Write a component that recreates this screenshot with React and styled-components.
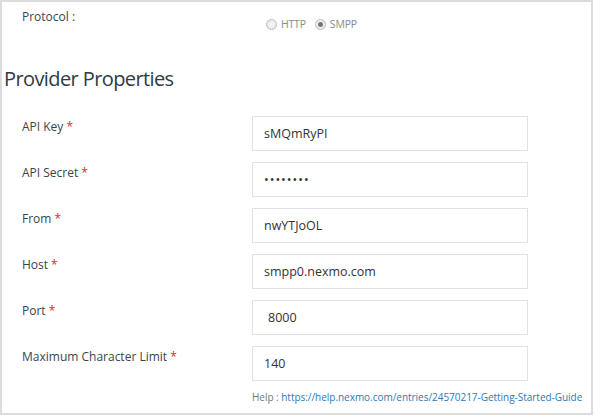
import { createGlobalStyle } from "styled-components";
import styled from "styled-components";

const GlobalStyle = createGlobalStyle`
  html, body {
    margin: 0;
    padding: 0;
    background: #ffffff;
  }
  body {
    font-family: "Open Sans", "Noto Sans", sans-serif;
  }
`;

const Frame = styled.div`
  box-sizing: border-box;
  width: 593px;
  height: 415px;
  border: 2px solid #dcdcdc;
  padding-top: 6px;
`;

const ProtocolRow = styled.div`
  display: grid;
  grid-template-columns: 244px 1fr;
  padding-left: 20px;
  height: 56px;
`;

const Label = styled.div`
  font-size: 12px;
  line-height: 18px;
  color: #3a4450;
  padding-top: ${(p) => p.$offset || 0}px;
`;

const RadioGroup = styled.div`
  display: flex;
  align-items: center;
  gap: 4px;
  padding-top: 9px;
  height: 14px;
`;

const RadioCircle = styled.span`
  box-sizing: border-box;
  width: 11px;
  height: 11px;
  border-radius: 50%;
  border: 1px solid #bdbdbd;
  background: radial-gradient(circle, #f6f6f6 0%, #e4e4e4 100%);
  display: flex;
  align-items: center;
  justify-content: center;
  &::after {
    content: "";
    width: 5px;
    height: 5px;
    border-radius: 50%;
    background: ${(p) => (p.$checked ? "#777" : "transparent")};
  }
`;

const RadioText = styled.span`
  font-size: 10.5px;
  color: #8a8a8a;
  margin-right: 5px;
  letter-spacing: -0.2px;
`;

const Heading = styled.h2`
  margin: 0 0 0 2px;
  font-size: 20px;
  letter-spacing: -0.6px;
  font-weight: 400;
  color: #2f3a44;
  line-height: 30px;
  height: 52px;
`;

const Fields = styled.div`
  display: flex;
  flex-direction: column;
  gap: 11px;
`;

const Row = styled.div`
  display: grid;
  grid-template-columns: 230px 276px;
  padding-left: 20px;
`;

const Req = styled.span`
  color: #e02a2a;
  margin-left: 3px;
`;

const Input = styled.div`
  box-sizing: border-box;
  height: 35px;
  border: 1px solid #dde3e8;
  display: flex;
  align-items: center;
  padding-left: ${(p) => p.$pad || 11}px;
  font-size: 12.5px;
  color: #333;
  letter-spacing: ${(p) => (p.$secret ? "1px" : "0")};
`;

const Help = styled.div`
  margin: 9px 0 0 250px;
  font-size: 10px;
  letter-spacing: -0.03px;
  white-space: nowrap;
  color: #777;
  a {
    color: #2a7ab8;
    text-decoration: none;
  }
`;

const fields = [
  { label: "API Key", value: "sMQmRyPI" },
  { label: "API Secret", value: "••••••••", secret: true },
  { label: "From", value: "nwYTJoOL" },
  { label: "Host", value: "smpp0.nexmo.com" },
  { label: "Port", value: "8000", pad: 15 },
  { label: "Maximum Character Limit", value: "140" },
];

export default function App() {
  return (
    <>
      <GlobalStyle />
      <Frame>
        <ProtocolRow>
          <Label>Protocol :</Label>
          <RadioGroup>
            <RadioCircle />
            <RadioText>HTTP</RadioText>
            <RadioCircle $checked />
            <RadioText>SMPP</RadioText>
          </RadioGroup>
        </ProtocolRow>
        <Heading>Provider Properties</Heading>
        <Fields>
          {fields.map((f) => (
            <Row key={f.label}>
              <Label $offset={2}>
                {f.label}
                <Req>*</Req>
              </Label>
              <Input $secret={f.secret} $pad={f.pad}>
                {f.value}
              </Input>
            </Row>
          ))}
        </Fields>
        <Help>
          Help : <a href="#">https://help.nexmo.com/entries/24570217-Getting-Started-Guide</a>
        </Help>
      </Frame>
    </>
  );
}
